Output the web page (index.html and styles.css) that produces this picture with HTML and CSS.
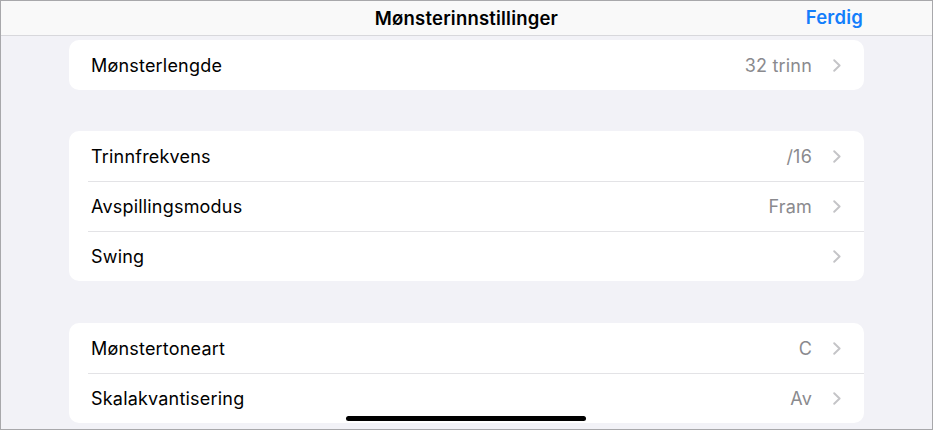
FILE: index.html
```html
<!DOCTYPE html>
<html lang="no">
<head>
<meta charset="utf-8">
<title>Mønsterinnstillinger</title>
<link rel="stylesheet" href="styles.css">
</head>
<body>
<div class="frame">
  <header class="navbar">
    <div class="nav-title">Mønsterinnstillinger</div>
    <button class="nav-done">Ferdig</button>
  </header>
  <main class="content">
    <section class="card">
      <div class="row"><span class="label">Mønsterlengde</span><span class="value">32 trinn</span><svg class="chev" viewBox="0 0 8 13"><path d="M1.2 1.2 L6.6 6.5 L1.2 11.8"/></svg></div>
    </section>
    <section class="card">
      <div class="row"><span class="label">Trinnfrekvens</span><span class="value">/16</span><svg class="chev" viewBox="0 0 8 13"><path d="M1.2 1.2 L6.6 6.5 L1.2 11.8"/></svg></div>
      <div class="row"><span class="label">Avspillingsmodus</span><span class="value">Fram</span><svg class="chev" viewBox="0 0 8 13"><path d="M1.2 1.2 L6.6 6.5 L1.2 11.8"/></svg></div>
      <div class="row"><span class="label">Swing</span><span class="value"></span><svg class="chev" viewBox="0 0 8 13"><path d="M1.2 1.2 L6.6 6.5 L1.2 11.8"/></svg></div>
    </section>
    <section class="card">
      <div class="row"><span class="label">Mønstertoneart</span><span class="value">C</span><svg class="chev" viewBox="0 0 8 13"><path d="M1.2 1.2 L6.6 6.5 L1.2 11.8"/></svg></div>
      <div class="row"><span class="label">Skalakvantisering</span><span class="value">Av</span><svg class="chev" viewBox="0 0 8 13"><path d="M1.2 1.2 L6.6 6.5 L1.2 11.8"/></svg></div>
    </section>
  </main>
  <div class="home-indicator"></div>
</div>
</body>
</html>
```

FILE: styles.css
```css
* { box-sizing: border-box; }
html, body { margin: 0; padding: 0; background: #ffffff; }
body { font-family: Inter, "Noto Sans", "Liberation Sans", sans-serif; }

.frame {
  position: relative;
  width: 933px;
  height: 430px;
  border: 1px solid #a8a8ab;
  background: #f2f2f7;
  overflow: hidden;
}

.navbar {
  position: relative;
  height: 35px;
  background: #f9f9f9;
  border-bottom: 1px solid #d8d8dc;
  display: flex;
  align-items: center;
  justify-content: center;
}
.nav-title {
  font-size: 18.5px;
  font-weight: 600;
  color: #000;
  letter-spacing: 0.2px;
  margin-top: -1px;
}
.nav-done {
  position: absolute;
  right: 69px;
  top: 5px;
  border: 0;
  background: none;
  padding: 0;
  font-family: inherit;
  font-size: 18.5px;
  font-weight: 600;
  letter-spacing: 0.2px;
  color: #147efb;
}

.content {
  padding: 4px 68px 0 68px;
  display: flex;
  flex-direction: column;
  gap: 41px;
}
.card {
  background: #ffffff;
  border-radius: 10px;
  overflow: hidden;
}
.card + .card + .card { margin-top: 1px; }

.row {
  position: relative;
  height: 50px;
  display: flex;
  align-items: center;
  padding-left: 22px;
  padding-right: 23px;
  font-size: 18px;
  letter-spacing: 0.2px;
}
.row + .row::before {
  content: "";
  position: absolute;
  left: 19px;
  right: 0;
  top: 0;
  border-top: 1px solid #e3e3e6;
}
.label { flex: 1; color: #000; }
.value { color: #8a8a8e; margin-right: 21px; }
.chev {
  width: 8px;
  height: 13px;
  fill: none;
  stroke: #c4c4c7;
  stroke-width: 1.9;
  stroke-linecap: round;
  stroke-linejoin: round;
}

.home-indicator {
  position: absolute;
  left: 345px;
  bottom: 8px;
  width: 240px;
  height: 5px;
  border-radius: 3px;
  background: #000;
}
```
